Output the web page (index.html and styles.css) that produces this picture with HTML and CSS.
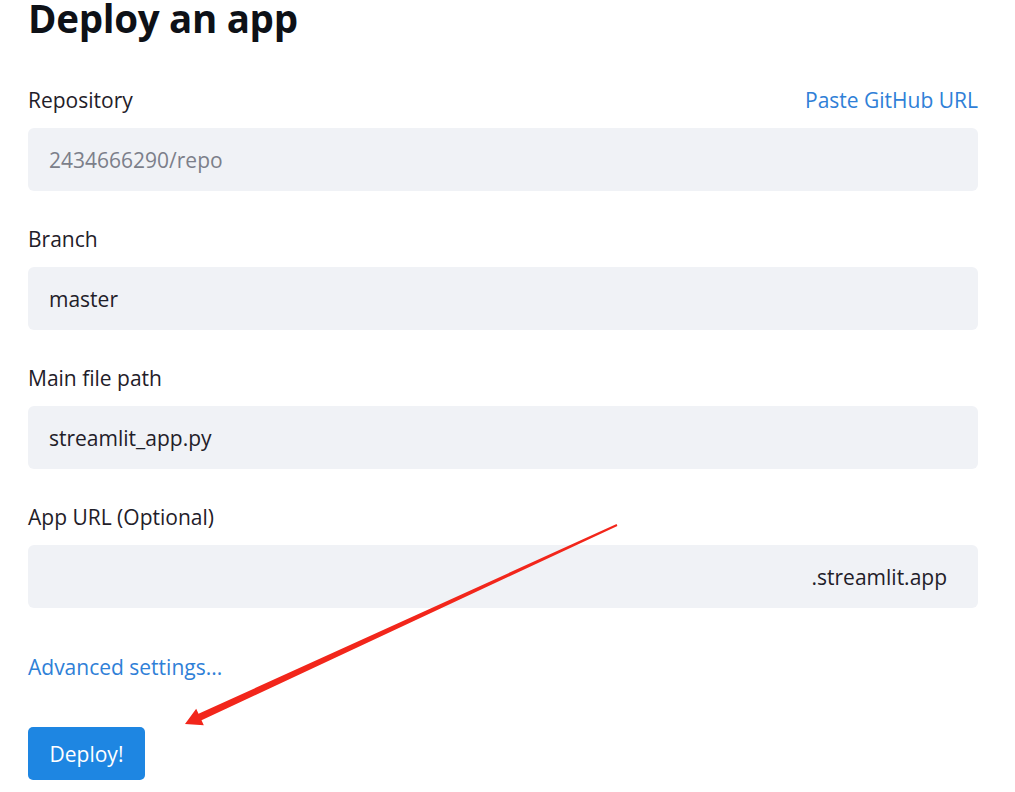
FILE: index.html
```html
<!DOCTYPE html>
<html>
<head>
<meta charset="utf-8">
<link rel="stylesheet" href="styles.css">
</head>
<body>
<main class="page">
  <h1 class="title">Deploy an app</h1>
  <div class="field">
    <div class="label-row">
      <span class="label">Repository</span>
      <a class="link">Paste GitHub URL</a>
    </div>
    <div class="input placeholder">2434666290/repo</div>
  </div>
  <div class="field">
    <div class="label-row"><span class="label">Branch</span></div>
    <div class="input">master</div>
  </div>
  <div class="field">
    <div class="label-row"><span class="label">Main file path</span></div>
    <div class="input">streamlit_app.py</div>
  </div>
  <div class="field">
    <div class="label-row"><span class="label">App URL (Optional)</span></div>
    <div class="input suffix">.streamlit.app</div>
  </div>
  <a class="link advanced">Advanced settings...</a>
  <button class="deploy">Deploy!</button>
</main>
<svg class="arrow" width="1015" height="792" viewBox="0 0 1015 792">
  <polygon points="616.6,524.1 198.5,713.8 196.2,708.8 185,724 203.8,725.2 201.5,720.2 617.4,525.9" fill="#f2261b"/>
</svg>
</body>
</html>
```
FILE: styles.css
```css
html, body {
  margin: 0;
  padding: 0;
  background: #ffffff;
}
body {
  font-family: "Open Sans", "Noto Sans", sans-serif;
  color: #1f2029;
  position: relative;
  width: 1015px;
  height: 792px;
  overflow: hidden;
}
.page {
  padding: 0 37px 0 28px;
  display: flex;
  flex-direction: column;
}
.title {
  margin: 0;
  font-size: 38.5px;
  letter-spacing: -0.3px;
  line-height: 36px;
  font-weight: 700;
  color: #0e1117;
}
.field {
  display: flex;
  flex-direction: column;
  margin-top: 34px;
}
.field:first-of-type {
  margin-top: 50px;
}
.label-row {
  display: flex;
  justify-content: space-between;
  align-items: center;
  height: 28px;
  margin-bottom: 14px;
}
.label {
  font-size: 21px;
  line-height: 28px;
  color: #1f2029;
}
.link {
  font-size: 21px;
  line-height: 28px;
  color: #2f80d7;
  cursor: pointer;
}
.input {
  background: #f0f2f6;
  border-radius: 6px;
  height: 63px;
  display: flex;
  align-items: center;
  padding: 0 21px;
  font-size: 21px;
  color: #1f2029;
}
.placeholder {
  color: #7c7f8a;
}
.suffix {
  justify-content: flex-end;
  padding-right: 31px;
}
.advanced {
  margin-top: 45px;
  align-self: flex-start;
}
.deploy {
  margin-top: 46px;
  align-self: flex-start;
  width: 117px;
  height: 53px;
  border: none;
  border-radius: 5px;
  background: #1e86e2;
  color: #ffffff;
  font-family: inherit;
  font-size: 21px;
}
.arrow {
  position: absolute;
  left: 0;
  top: 0;
  pointer-events: none;
}
```
